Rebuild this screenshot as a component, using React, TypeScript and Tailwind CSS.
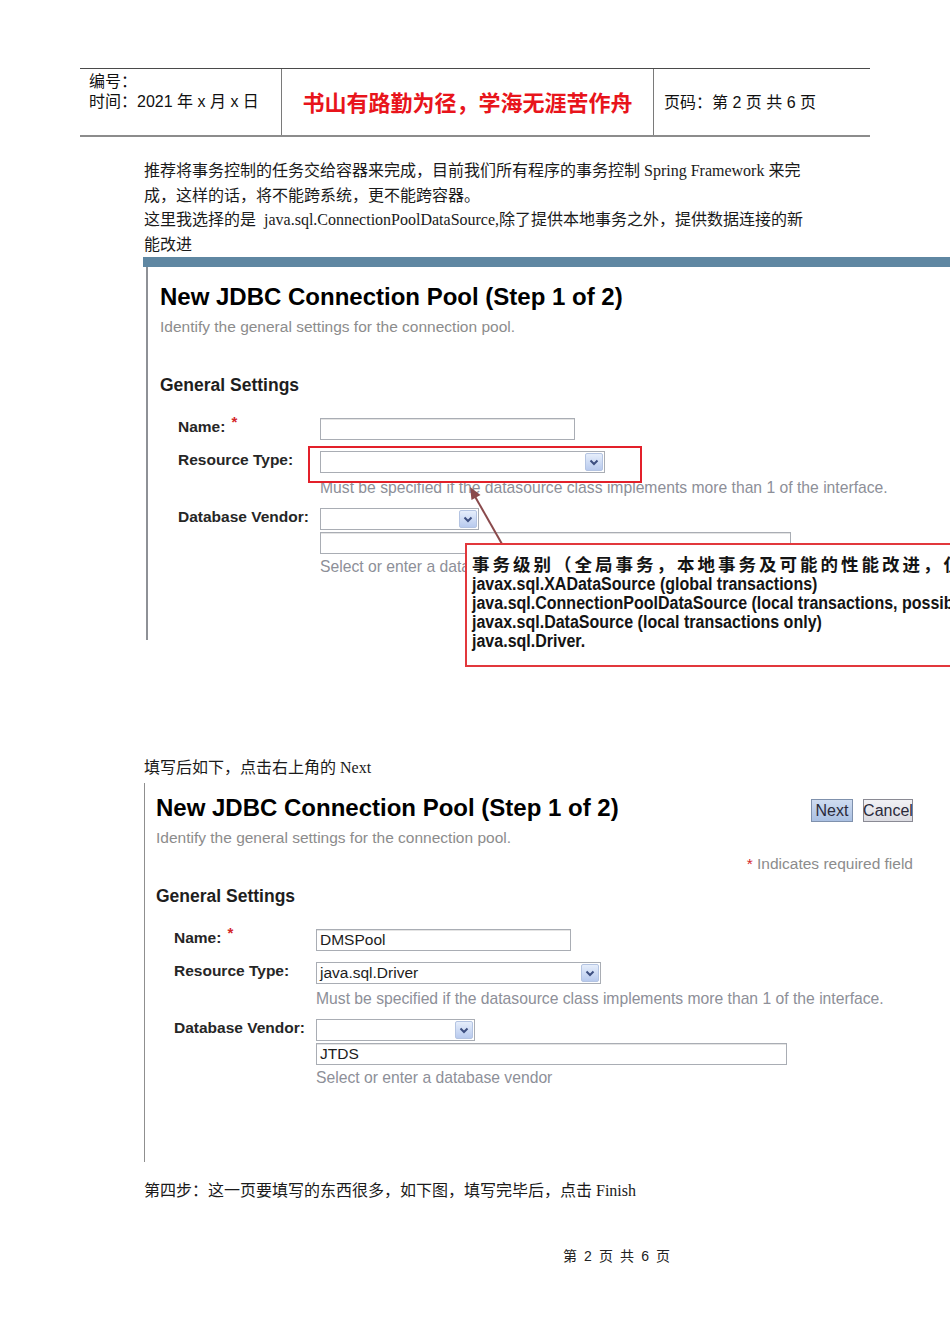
import * as React from "react";

const serif = "font-['Liberation_Serif','Noto_Sans_CJK_SC',serif]";

function Chevron() {
  return (
    <span className="mr-px flex h-[18px] w-[18px] items-center justify-center rounded-[2px] border border-[#b4c4e2] bg-linear-to-b from-[#e6eefb] to-[#b8caee]">
      <svg width="10" height="7" viewBox="0 0 10 7">
        <path d="M1.5 1.5 L5 5 L8.5 1.5" fill="none" stroke="#3d4f80" strokeWidth="2" />
      </svg>
    </span>
  );
}

function TextBox({ width, value }: { width: string; value?: string }) {
  return (
    <div
      className={`flex h-[22px] items-center border border-[#a9adb4] bg-white px-[3px] text-[15.5px] text-[#1c1c1c] shadow-[inset_0_1px_0_#e4e4e4] ${width}`}
    >
      {value}
    </div>
  );
}

function SelectBox({ width, value }: { width: string; value?: string }) {
  return (
    <div
      className={`flex h-[22px] items-center justify-between border border-[#a9adb4] bg-white pl-[3px] text-[15.5px] text-[#1c1c1c] ${width}`}
    >
      <span>{value}</span>
      <Chevron />
    </div>
  );
}

function Label({ children, required }: { children: React.ReactNode; required?: boolean }) {
  return (
    <div className="pl-[18px] text-[15.5px] font-bold leading-[18px] whitespace-nowrap text-[#262626]">
      {children}
      {required && <span className="relative -top-[5px] ml-[6px] text-[15px] text-[#d4262a]">*</span>}
    </div>
  );
}

// step 1 of the connection pool wizard
function PoolForm({ filled }: { filled: boolean }) {
  return (
    <div className="font-['Liberation_Sans',sans-serif]">
      <div className="flex items-start justify-between">
        <h1 className="text-[24px] font-bold leading-[28px] whitespace-nowrap text-black">
          New JDBC Connection Pool (Step 1 of 2)
        </h1>
        {filled && (
          <div className="mt-[5px] flex gap-[10px] text-[16px] leading-none text-[#2a2a3a]">
            <span className="flex h-[23px] w-[42px] items-center justify-center border border-[#7f91ad] bg-linear-to-b from-[#cfdcf0] to-[#aac0e2]">
              Next
            </span>
            <span className="flex h-[23px] w-[50px] items-center justify-center border border-[#8a8a94] bg-linear-to-b from-[#f1f1f4] to-[#dcdce2]">
              Cancel
            </span>
          </div>
        )}
      </div>
      <p className="mt-[6px] text-[15.5px] leading-[20px] text-[#8c8c8c]">
        Identify the general settings for the connection pool.
      </p>
      <p className={`mt-[6px] text-right text-[15.5px] leading-[20px] text-[#8c8c8c] ${filled ? "" : "invisible"}`}>
        <span className="text-[#d4262a]">*</span> Indicates required field
      </p>
      <h2 className="mt-[12px] text-[17.5px] font-bold leading-[20px] text-[#1e1e1e]">General Settings</h2>

      <div className="mt-[23px] grid grid-cols-[160px_1fr] items-start">
        <Label required>Name:</Label>
        <TextBox width="w-[255px]" value={filled ? "DMSPool" : undefined} />
      </div>
      <div className="mt-[11px] grid grid-cols-[160px_1fr] items-start">
        <Label>Resource Type:</Label>
        <div>
          <SelectBox width="w-[285px]" value={filled ? "java.sql.Driver" : undefined} />
          <p className="mt-[6px] text-[15.7px] leading-[18px] whitespace-nowrap text-[#8d8f98]">
            Must be specified if the datasource class implements more than 1 of the interface.
          </p>
        </div>
      </div>
      <div className="mt-[11px] grid grid-cols-[160px_1fr] items-start">
        <Label>Database Vendor:</Label>
        <div>
          <SelectBox width="w-[159px]" />
          <div className="mt-[2px]">
            <TextBox width="w-[471px]" value={filled ? "JTDS" : undefined} />
          </div>
          <p className="mt-[4px] text-[15.7px] leading-[18px] whitespace-nowrap text-[#8d8f98]">
            Select or enter a database vendor
          </p>
        </div>
      </div>
    </div>
  );
}

export default function App() {
  return (
    <div className="relative min-h-[1344px] w-[950px] overflow-hidden bg-white">
      {/* page header table */}
      <div className="mt-[68px] ml-[80px] grid h-[69px] w-[790px] grid-cols-[201px_373px_216px] border-t border-b-2 border-t-[#4a4a4a] border-b-[#8c8c8c] font-['Liberation_Sans','Noto_Sans_CJK_SC',sans-serif] text-[16px] text-[#111]">
        <div className="pt-[3px] pl-[9px] leading-[20px]">
          <div>编号：</div>
          <div>时间：2021 年 x 月 x 日</div>
        </div>
        <div className="flex items-center justify-center border-x border-[#7a7a7a] pt-[3px] text-[22px] font-bold text-[#e8141b]">
          书山有路勤为径，学海无涯苦作舟
        </div>
        <div className="flex items-center pt-[2px] pl-[10px]">页码：第 2 页 共 6 页</div>
      </div>

      <div className={`mt-[22px] ml-[144px] text-[16px] leading-[24.5px] whitespace-nowrap text-[#1a1a1a] ${serif}`}>
        <p>推荐将事务控制的任务交给容器来完成，目前我们所有程序的事务控制 Spring Framework 来完</p>
        <p>成，这样的话，将不能跨系统，更不能跨容器。</p>
        <p>这里我选择的是&nbsp; java.sql.ConnectionPoolDataSource,除了提供本地事务之外，提供数据连接的新</p>
        <p>能改进</p>
      </div>

      {/* first capture with annotation */}
      <div className="relative ml-[143px] h-[410px] w-[807px] overflow-hidden">
        <div className="h-[10px] bg-[#5f87a2]" />
        <div className="ml-[3px] h-[373px] border-l-2 border-[#8e9196] pt-[16px] pl-[12px]">
          <PoolForm filled={false} />
        </div>

        <div className="absolute top-[189px] left-[165px] h-[37px] w-[334px] border-2 border-[#e3202a]" />

        <svg className="pointer-events-none absolute inset-0" width="807" height="410">
          <line x1="359" y1="287" x2="330" y2="236" stroke="#8a4a4c" strokeWidth="2" />
          <polygon points="327,230 337.5,238 328.5,243" fill="#8a4a4c" />
        </svg>

        <div className="absolute top-[286px] left-[322px] h-[124px] w-[540px] overflow-hidden border-2 border-[#e2383c] bg-white pt-[8px] pl-[5px] text-[#141414]">
          <p className="font-['Noto_Sans_CJK_SC',sans-serif] text-[17.5px] leading-[22px] font-bold tracking-[3px] whitespace-nowrap">
            事务级别（全局事务，本地事务及可能的性能改进，仅
          </p>
          <div className="origin-left scale-x-[0.89] font-['Liberation_Sans',sans-serif] text-[18px] leading-[19px] font-bold whitespace-nowrap">
            <p>javax.sql.XADataSource (global transactions)</p>
            <p>java.sql.ConnectionPoolDataSource (local transactions, possibly performance improvement)</p>
            <p>javax.sql.DataSource (local transactions only)</p>
            <p>java.sql.Driver.</p>
          </div>
        </div>
      </div>

      <p className={`mt-[89px] ml-[144px] text-[16px] leading-[24px] text-[#1a1a1a] ${serif}`}>
        填写后如下，点击右上角的 Next
      </p>

      {/* second capture, fields filled in */}
      <div className="mt-[3px] ml-[144px] h-[379px] border-l border-[#8f8f8f] pt-[11px] pr-[37px] pl-[11px]">
        <PoolForm filled />
      </div>

      <p className={`mt-[17px] ml-[144px] text-[16px] leading-[24px] text-[#1a1a1a] ${serif}`}>
        第四步：这一页要填写的东西很多，如下图，填写完毕后，点击 Finish
      </p>

      <p className="mt-[43px] ml-[563px] font-['Liberation_Sans','Noto_Sans_CJK_SC',sans-serif] text-[14px] leading-[20px] tracking-[1.6px] text-[#222]">
        第 2 页 共 6 页
      </p>
    </div>
  );
}
